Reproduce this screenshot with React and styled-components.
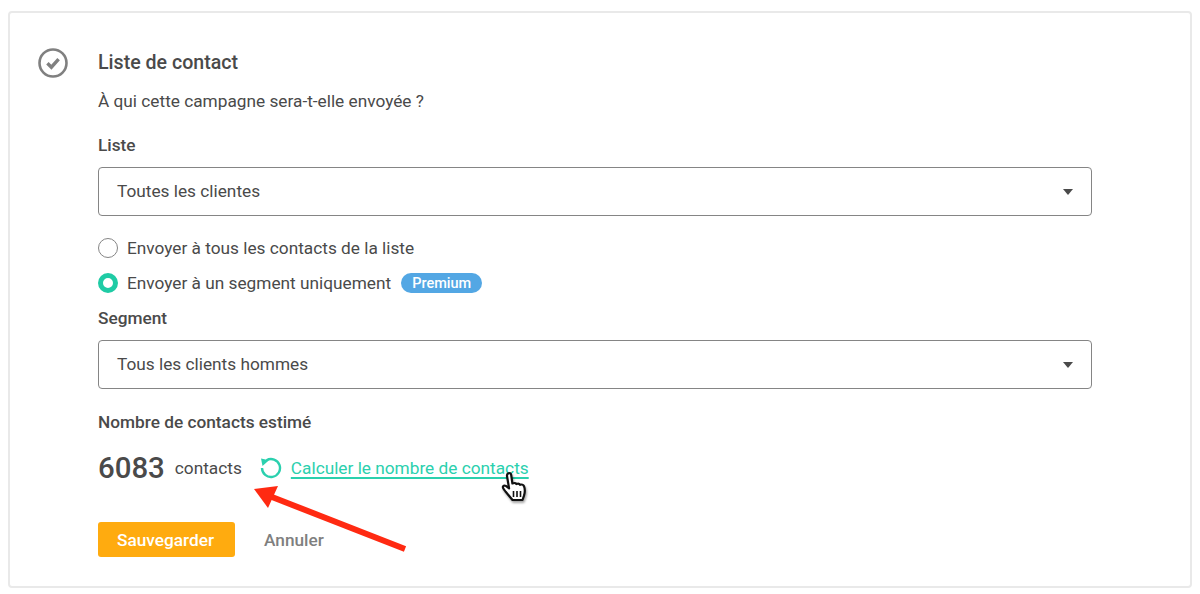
import React from 'react';
import styled, { createGlobalStyle } from 'styled-components';

const GlobalStyle = createGlobalStyle`
  html, body {
    margin: 0;
    padding: 0;
    background: #fff;
  }
  body {
    font-family: Roboto, "Liberation Sans", sans-serif;
    color: #4a4a4a;
  }
`;

const App = () => {
  return (
    <Page>
      <GlobalStyle />
      <Card>
        <StepIcon viewBox="0 0 30 30">
          <circle cx="15" cy="15" r="13.5" fill="none" stroke="#808080" strokeWidth="2.6" />
          <path d="M9.4 15.2l4 4 7.2-8" fill="none" stroke="#808080" strokeWidth="3.4" />
        </StepIcon>
        <Content>
          <Title>Liste de contact</Title>
          <Subtitle>À qui cette campagne sera-t-elle envoyée ?</Subtitle>
          <FieldLabel>Liste</FieldLabel>
          <Select>
            Toutes les clientes
            <Caret />
          </Select>
          <RadioGroup>
            <RadioRow>
              <Radio />
              Envoyer à tous les contacts de la liste
            </RadioRow>
            <RadioRow>
              <Radio checked />
              Envoyer à un segment uniquement
              <Badge>Premium</Badge>
            </RadioRow>
          </RadioGroup>
          <SegmentLabel>Segment</SegmentLabel>
          <Select>
            Tous les clients hommes
            <Caret />
          </Select>
          <EstimateLabel>Nombre de contacts estimé</EstimateLabel>
          <EstimateRow>
            <Count>6083</Count>
            <Unit>contacts</Unit>
            <RefreshIcon viewBox="0 0 22 22">
              <path d="M6.5 3.2A9 9 0 1 1 2 11" fill="none" stroke="#2bd0ae" strokeWidth="2.4" />
              <path d="M1 1.5L9 3.2L2.5 9Z" fill="#2bd0ae" />
            </RefreshIcon>
            <CalcLink href="#">Calculer le nombre de contacts</CalcLink>
          </EstimateRow>
          <Actions>
            <SaveButton>Sauvegarder</SaveButton>
            <CancelButton>Annuler</CancelButton>
          </Actions>
        </Content>
        <Arrow viewBox="0 0 160 72">
          <path d="M155 69L22 17" fill="none" stroke="#ff2a12" strokeWidth="6" />
          <path d="M4 9L28 6L18 28Z" fill="#ff2a12" />
        </Arrow>
        <HandCursor viewBox="0 0 30 36">
          <path
            d="M8 2.5c1.4-1 3 0 3.2 1.5l1.2 8.5c1.6-.7 3.2-.6 4 .5 1.3-.6 3-.4 3.8.8 1.3-.5 3.2 0 3.8 1.4 1 2.6 1 6.3 0 9.5l-1.5 4.3H12.500L5.500 20.500c-1.300-1.700-2.700-3-2.700-4.400 0-1.300 1.500-2 3-1.200l3.300 2.500L7 5c-.1-1 .2-2 1-2.500z"
            fill="#fff"
            stroke="#111"
            strokeWidth="2.2"
            strokeLinejoin="round"
          />
          <path d="M13.5 20v6M17 20v6M20.5 20v6" stroke="#111" strokeWidth="1.6" />
        </HandCursor>
      </Card>
    </Page>
  );
};

const Page = styled.div`
  width: 1200px;
  height: 594px;
  padding: 11px 8px 6px;
  box-sizing: border-box;
  overflow: hidden;
`;

const Card = styled.div`
  position: relative;
  display: flex;
  gap: 30px;
  height: 100%;
  box-sizing: border-box;
  padding: 36px 98px 0 28px;
  border: 2px solid #e9e9e9;
  border-radius: 4px;
  background: #fff;
`;

const StepIcon = styled.svg`
  flex: none;
  width: 30px;
  height: 30px;
  margin-top: -1px;
`;

const Content = styled.div`
  flex: 1;
  display: flex;
  flex-direction: column;
  align-items: flex-start;
  min-width: 0;
`;

const Title = styled.h2`
  margin: 0;
  font-size: 19.6px;
  line-height: 28px;
  font-weight: 500;
`;

const Subtitle = styled.p`
  margin: 11px 0 0;
  font-size: 17.25px;
  line-height: 26px;
`;

const FieldLabel = styled.label`
  margin-top: 18px;
  font-size: 17.25px;
  line-height: 26px;
  font-weight: 500;
`;

const Select = styled.div`
  position: relative;
  display: flex;
  align-items: center;
  width: 100%;
  height: 49px;
  margin-top: 9px;
  padding: 0 18px 1px;
  box-sizing: border-box;
  border: 1.5px solid #858585;
  border-radius: 4px;
  font-size: 17.25px;
  background: #fff;
`;

const Caret = styled.span`
  position: absolute;
  top: 21px;
  right: 18px;
  border-left: 5.5px solid transparent;
  border-right: 5.5px solid transparent;
  border-top: 6px solid #4a4a4a;
`;

const RadioGroup = styled.div`
  display: flex;
  flex-direction: column;
  gap: 9px;
  margin-top: 19px;
`;

const RadioRow = styled.div`
  display: flex;
  align-items: center;
  height: 26px;
  font-size: 17.25px;
`;

const Radio = styled.span`
  flex: none;
  width: 20px;
  height: 20px;
  margin-right: 9px;
  box-sizing: border-box;
  border-radius: 50%;
  background: #fff;
  border: ${(props) => (props.checked ? '5px solid #1fcba5' : '1.5px solid #858585')};
`;

const Badge = styled.span`
  margin-left: 10px;
  padding: 0 11px;
  height: 20px;
  line-height: 21px;
  border-radius: 10px;
  background: #53a7e4;
  color: #fff;
  font-size: 14.5px;
  font-weight: 500;
`;

const SegmentLabel = styled(FieldLabel)`
  margin-top: 9px;
`;

const EstimateLabel = styled(FieldLabel)`
  margin-top: 20px;
`;

const EstimateRow = styled.div`
  display: flex;
  align-items: center;
  height: 40px;
  margin-top: 13px;
`;

const Count = styled.span`
  font-size: 29.4px;
  font-weight: 500;
`;

const Unit = styled.span`
  margin-left: 10px;
  font-size: 17.25px;
`;

const RefreshIcon = styled.svg`
  flex: none;
  width: 22px;
  height: 22px;
  margin-left: 18px;
`;

const CalcLink = styled.a`
  margin-left: 9px;
  color: #2bd0ae;
  font-size: 17.25px;
  text-decoration: underline;
  text-decoration-color: #2bd0ae;
  text-decoration-thickness: 1.5px;
  text-underline-offset: 3px;
`;

const Actions = styled.div`
  display: flex;
  align-items: center;
  gap: 29px;
  margin-top: 34px;
`;

const SaveButton = styled.button`
  width: 137px;
  height: 35px;
  padding: 0 2px 0 0;
  border: 0;
  border-radius: 3px;
  background: #ffab0f;
  color: #fff;
  font-family: inherit;
  font-size: 17.25px;
  font-weight: 500;
`;

const CancelButton = styled.button`
  padding: 0;
  border: 0;
  background: none;
  color: #7f7f7f;
  font-family: inherit;
  font-size: 17.25px;
  font-weight: 500;
`;

const Arrow = styled.svg`
  position: absolute;
  left: 240px;
  top: 467px;
  width: 160px;
  height: 72px;
`;

const HandCursor = styled.svg`
  position: absolute;
  left: 490px;
  top: 458px;
  width: 30px;
  height: 36px;
  filter: drop-shadow(1px 2px 1px rgba(0, 0, 0, 0.35));
`;

export default App;
